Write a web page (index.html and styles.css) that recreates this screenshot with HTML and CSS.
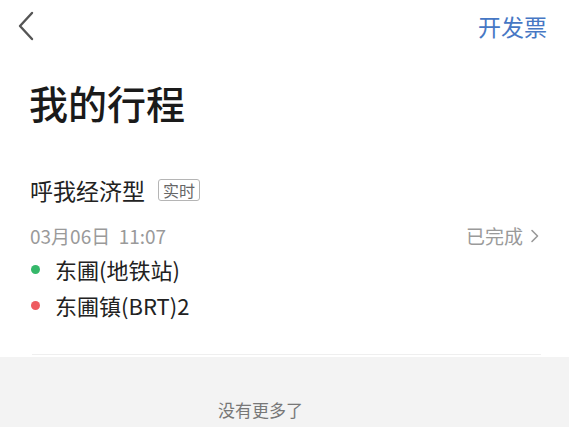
FILE: index.html
```html
<!DOCTYPE html>
<html lang="zh">
<head>
<meta charset="utf-8">
<link rel="stylesheet" href="styles.css">
</head>
<body>
<div class="page">
  <header class="nav">
    <svg class="back" width="16" height="30" viewBox="0 0 16 30"><path d="M14 2 L2 15 L14 28" fill="none" stroke="#555" stroke-width="2.4" stroke-linecap="round" stroke-linejoin="round"/></svg>
    <span class="invoice">开发票</span>
  </header>
  <h1 class="title">我的行程</h1>
  <section class="card">
    <div class="trip-type">呼我经济型<span class="tag">实时</span></div>
    <div class="meta">
      <span class="date">03月06日&nbsp;&nbsp;11:07</span>
      <span class="status">已完成<svg class="chev" width="9" height="14" viewBox="0 0 9 14"><path d="M2 1.5 L7.5 7 L2 12.5" fill="none" stroke="#999" stroke-width="1.6" stroke-linecap="round" stroke-linejoin="round"/></svg></span>
    </div>
    <div class="stop"><span class="dot green"></span>东圃(地铁站)</div>
    <div class="stop"><span class="dot red"></span>东圃镇(BRT)2</div>
    <div class="divider"></div>
  </section>
  <footer class="end">没有更多了</footer>
</div>
</body>
</html>
```

FILE: styles.css
```css
html, body {
  margin: 0;
  padding: 0;
  background: #ffffff;
  font-family: "Noto Sans CJK SC", "Noto Sans", sans-serif;
}
.page {
  width: 569px;
  height: 427px;
  overflow: hidden;
  display: flex;
  flex-direction: column;
}
.nav {
  height: 52px;
  display: flex;
  align-items: center;
  justify-content: space-between;
  padding: 0 22px 0 18px;
}
.back { display: block; }
.invoice {
  font-size: 23px;
  color: #4677c4;
  line-height: 30px;
}
.title {
  margin: 22px 0 0 29px;
  font-size: 39px;
  line-height: 56px;
  font-weight: 500;
  color: #1a1a1a;
}
.card {
  padding: 44px 28px 0 30px;
}
.trip-type {
  display: flex;
  align-items: center;
  font-size: 23px;
  line-height: 32px;
  color: #222;
}
.tag {
  margin-left: 13px;
  font-size: 16px;
  line-height: 20px;
  padding: 0 4px;
  border: 1px solid #b5b5b5;
  border-radius: 3px;
  color: #666;
}
.meta {
  margin-top: 15px;
  display: flex;
  justify-content: space-between;
  align-items: center;
  line-height: 30px;
  color: #9a9a9a;
  font-size: 19px;
}
.status {
  display: flex;
  align-items: center;
  gap: 7px;
  margin-right: 2px;
}
.chev { display: block; }
.stop {
  display: flex;
  align-items: center;
  font-size: 22px;
  line-height: 36px;
  color: #222;
}
.dot {
  width: 9px;
  height: 9px;
  border-radius: 50%;
  margin: 0 15px 0 1px;
}
.green { background: #35b86a; }
.red { background: #ee5b60; }
.divider {
  margin-top: 31px;
  height: 1px;
  background: #efefef;
  margin-left: 2px;
}
.end {
  margin-top: 2px;
  flex: 1;
  background: #f3f3f3;
  text-align: center;
  padding: 41px 48px 0 0;
  font-size: 17px;
  line-height: 24px;
  color: #777;
}
```
